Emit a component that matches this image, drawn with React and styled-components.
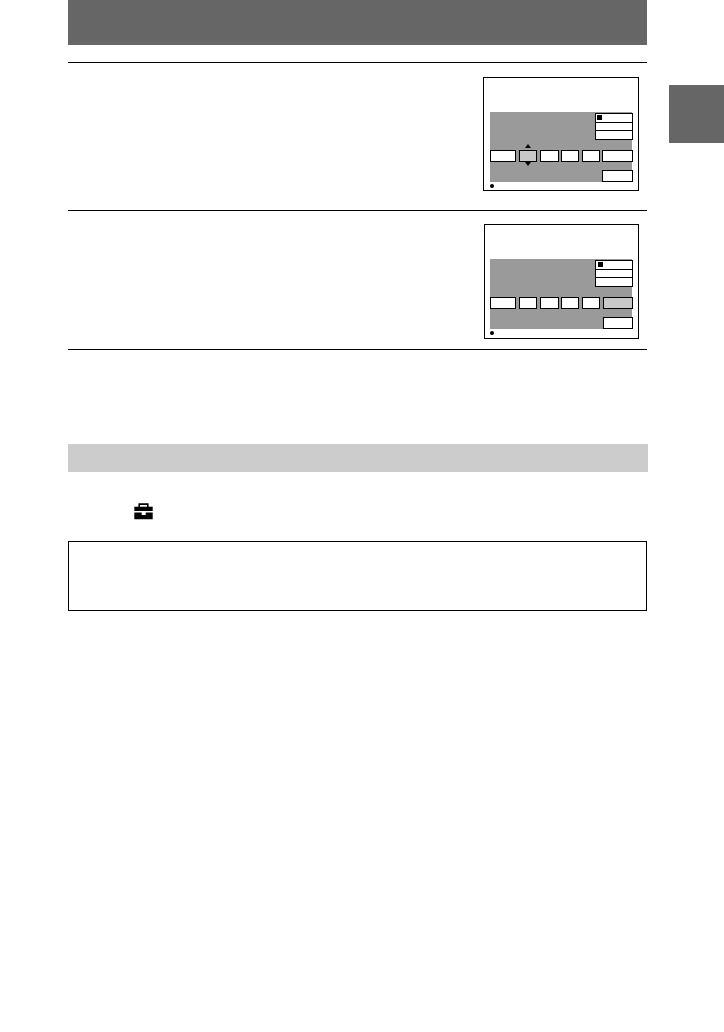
import styled, { createGlobalStyle } from "styled-components";

const GlobalStyle = createGlobalStyle`
    html, body {
        margin: 0;
        padding: 0;
        background: #fff;
        font-family: "Liberation Sans", Arial, sans-serif;
    }
`;

const fields = [
    { width: 26, gap: 0 },
    { width: 18, gap: 3 },
    { width: 19, gap: 3 },
    { width: 18, gap: 2 },
    { width: 18, gap: 3 },
];

const CameraScreen = ({ step }) => {
    const first = step === 1;
    const active = first ? 1 : 5;
    const lastWidth = first ? 31 : 30;
    return (
        <Screen $first={first}>
            <Panel>
                <ModeStack>
                    <ModeRow $first={first}><ModeMark /></ModeRow>
                    <ModeRow />
                    <ModeRow />
                </ModeStack>
                <FieldRow>
                    {fields.map((f, i) => (
                        <Field key={i} $width={f.width} $gap={f.gap} $active={active === i}>
                            {active === i && (
                                <>
                                    <ArrowUp />
                                    <ArrowDown />
                                </>
                            )}
                        </Field>
                    ))}
                    <LastField $width={lastWidth} $active={active === 5} />
                </FieldRow>
                <OkButton $width={lastWidth} />
            </Panel>
            <Dot $first={first} />
        </Screen>
    );
};

const ToolboxIcon = () => (
    <svg width="19" height="17" viewBox="0 0 19 17" aria-hidden="true">
        <path d="M5.2 4V1.1h8.6V4" fill="none" stroke="#000" strokeWidth="1.6" />
        <path d="M0.3 3.7h18.4V8H0.3z" fill="#000" />
        <path d="M0.3 9.5h7.4V12h4V9.5h7V16.3H0.3z" fill="#000" />
    </svg>
);

export default function App() {
    return (
        <Page>
            <GlobalStyle />
            <Main>
                <Header />
                <Step $first>
                    <CameraScreen step={1} />
                </Step>
                <Step $last>
                    <CameraScreen step={2} />
                </Step>
                <Band />
                <IconRow>
                    <ToolboxIcon />
                </IconRow>
                <NoteBox />
            </Main>
            <SideTab />
        </Page>
    );
}

const Page = styled.div`
    display: flex;
    align-items: flex-start;
    width: 724px;
    height: 1032px;
    overflow: hidden;
    background: #fff;
`;
const Main = styled.div`
    display: flex;
    flex-direction: column;
    flex: none;
    width: 579px;
    margin-left: 68px;
`;
const Header = styled.div`
    height: 45px;
    background: #666;
`;
const SideTab = styled.div`
    flex: none;
    width: 55px;
    height: 58px;
    margin: 85px 0 0 22px;
    background: #666;
`;
const Step = styled.div`
    display: flex;
    justify-content: flex-end;
    margin-top: ${p => (p.$first ? "17px" : "0")};
    padding: ${p => (p.$first ? "14px 8px 19px 0" : "13px 8px 10px 0")};
    border-top: 1px solid #000;
    border-bottom: ${p => (p.$last ? "1px solid #000" : "none")};
`;
const Screen = styled.div`
    box-sizing: border-box;
    position: relative;
    width: ${p => (p.$first ? "156px" : "155px")};
    height: ${p => (p.$first ? "114px" : "115px")};
    padding: 34px 0 0 ${p => (p.$first ? "6px" : "5px")};
    border: 1px solid #000;
    background: #fff;
`;
const Panel = styled.div`
    display: flex;
    flex-direction: column;
    align-items: flex-end;
    width: 142px;
    height: 70px;
    background: #9a9a9a;
`;
const ModeStack = styled.div`
    display: flex;
    flex-direction: column;
    box-sizing: border-box;
    width: 38px;
    height: 27px;
    margin: 1px -1px 0 0;
    border: 1px solid #000;
    background: #fff;
`;
const ModeRow = styled.div`
    display: flex;
    align-items: center;
    flex: 1;
    padding-left: ${p => (p.$first ? "1px" : "2px")};
    & + & {
        border-top: 1px solid #000;
    }
`;
const ModeMark = styled.div`
    width: 5px;
    height: 5px;
    background: #000;
`;
const FieldRow = styled.div`
    display: flex;
    align-self: flex-start;
    width: 143px;
    margin-top: 10px;
`;
const Field = styled.div`
    box-sizing: border-box;
    position: relative;
    flex: none;
    width: ${p => p.$width}px;
    height: 12px;
    margin-left: ${p => p.$gap}px;
    border: 1px solid #000;
    background: ${p => (p.$active ? "#c8c8c8" : "#fff")};
`;
const LastField = styled(Field)`
    margin-left: auto;
`;
const ArrowUp = styled.div`
    position: absolute;
    left: 5px;
    top: -7px;
    width: 0;
    height: 0;
    border-left: 3px solid transparent;
    border-right: 3px solid transparent;
    border-bottom: 4px solid #000;
`;
const ArrowDown = styled.div`
    position: absolute;
    left: 5px;
    bottom: -5px;
    width: 0;
    height: 0;
    border-left: 3px solid transparent;
    border-right: 3px solid transparent;
    border-top: 4px solid #000;
`;
const OkButton = styled.div`
    box-sizing: border-box;
    width: ${p => p.$width}px;
    height: 12px;
    margin: 8px -1px 0 0;
    border: 1px solid #000;
    background: #fff;
`;
const Dot = styled.div`
    position: absolute;
    left: ${p => (p.$first ? "6px" : "5px")};
    bottom: ${p => (p.$first ? "2px" : "3px")};
    width: 4px;
    height: 4px;
    border-radius: 50%;
    background: #000;
`;
const Band = styled.div`
    width: 580px;
    height: 28px;
    margin-top: 94px;
    background: #ccc;
`;
const IconRow = styled.div`
    display: flex;
    height: 17px;
    margin-top: 31px;
    padding-left: 66px;
`;
const NoteBox = styled.div`
    box-sizing: border-box;
    height: 70px;
    margin-top: 21px;
    border: 1px solid #000;
`;
